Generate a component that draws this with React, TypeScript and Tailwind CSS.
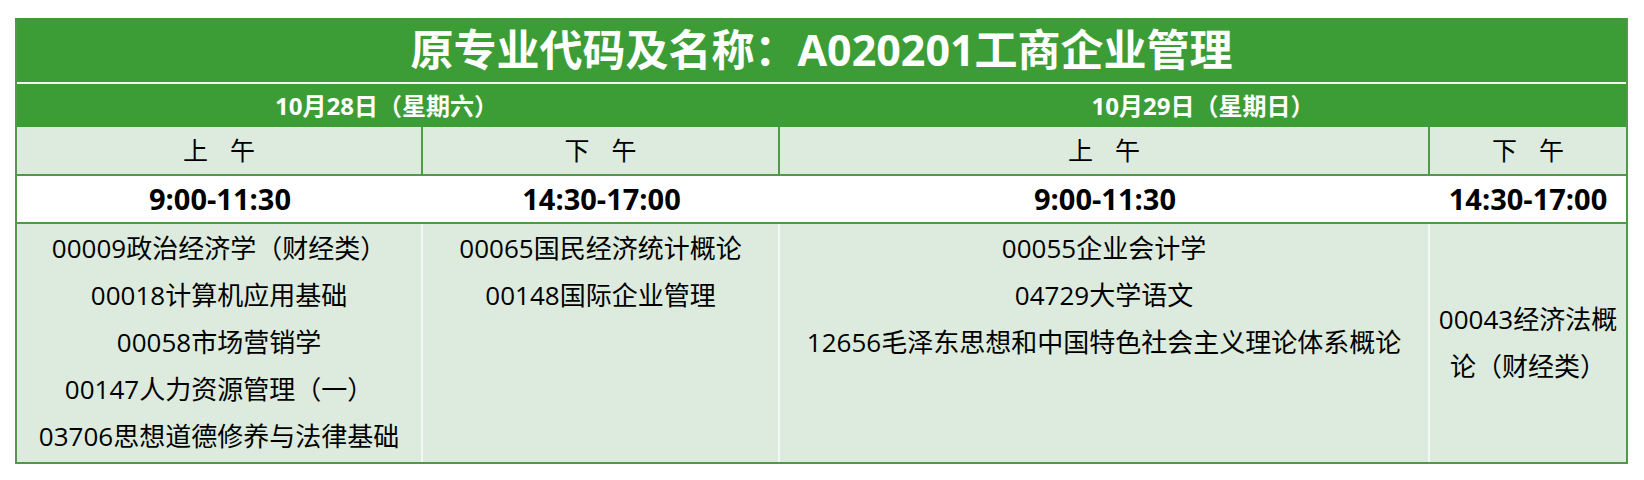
import React from "react";

const font = "font-['Open_Sans','Noto_Sans_CJK_SC',sans-serif]";

const amCourses = [
  "00009政治经济学（财经类）",
  "00018计算机应用基础",
  "00058市场营销学",
  "00147人力资源管理（一）",
  "03706思想道德修养与法律基础",
];

const pmCourses = ["00065国民经济统计概论", "00148国际企业管理"];

const sunAmCourses = [
  "00055企业会计学",
  "04729大学语文",
  "12656毛泽东思想和中国特色社会主义理论体系概论",
];

const PeriodCell = ({ label, last }: { label: [string, string]; last?: boolean }) => (
  <div
    className={`flex items-center justify-center gap-[22px] text-[25px] text-black ${
      last ? "" : "border-r-2 border-[#4f9a47]"
    }`}
  >
    <span>{label[0]}</span>
    <span>{label[1]}</span>
  </div>
);

const TimeCell = ({ time }: { time: string }) => (
  <div className="flex items-center justify-center text-[29px] font-bold text-black">
    {time}
  </div>
);

const CourseList = ({ items, last }: { items: string[]; last?: boolean }) => (
  <div
    className={`flex flex-col items-center pt-px text-[26px] leading-[47px] text-black ${
      last ? "" : "border-r-2 border-[#f4f8f3]"
    }`}
  >
    {items.map((c) => (
      <div key={c} className="whitespace-nowrap">
        {c}
      </div>
    ))}
  </div>
);

export default function App() {
  return (
    <div className={`bg-white w-[1644px] h-[480px] pt-[18px] pl-[15px] ${font}`}>
      <div className="w-[1613px] border-x-2 border-[#4f9a47]">
        {/* Title */}
        <div className="h-[64px] bg-[#3c9d36] flex items-center justify-center text-white font-bold text-[43px]">
          原专业代码及名称：A020201工商企业管理
        </div>
        <div className="h-[2px] bg-[#eef5ec]" />

        {/* Dates */}
        <div className="grid grid-cols-[763px_846px] h-[43px] bg-[#3c9d36] text-white font-bold text-[24px]">
          <div className="flex items-center justify-center pr-[24px]">10月28日（星期六）</div>
          <div className="flex items-center justify-center">10月29日（星期日）</div>
        </div>

        {/* Periods */}
        <div className="grid grid-cols-[406px_357px_650px_196px] h-[49px] bg-[#dcebdd] border-b-2 border-[#4f9a47]">
          <PeriodCell label={["上", "午"]} />
          <PeriodCell label={["下", "午"]} />
          <PeriodCell label={["上", "午"]} />
          <PeriodCell label={["下", "午"]} last />
        </div>

        {/* Times */}
        <div className="grid grid-cols-[406px_357px_650px_196px] h-[48px] bg-white border-b-2 border-[#4f9a47]">
          <TimeCell time="9:00-11:30" />
          <TimeCell time="14:30-17:00" />
          <TimeCell time="9:00-11:30" />
          <TimeCell time="14:30-17:00" />
        </div>

        {/* Courses */}
        <div className="grid grid-cols-[406px_357px_650px_196px] h-[240px] bg-[#dcebdd] border-b-2 border-[#4f9a47]">
          <CourseList items={amCourses} />
          <CourseList items={pmCourses} />
          <CourseList items={sunAmCourses} />
          <div className="flex flex-col items-center justify-center text-[26px] leading-[47px] text-black">
            <div className="whitespace-nowrap">00043经济法概</div>
            <div className="whitespace-nowrap">论（财经类）</div>
          </div>
        </div>
      </div>
    </div>
  );
}
